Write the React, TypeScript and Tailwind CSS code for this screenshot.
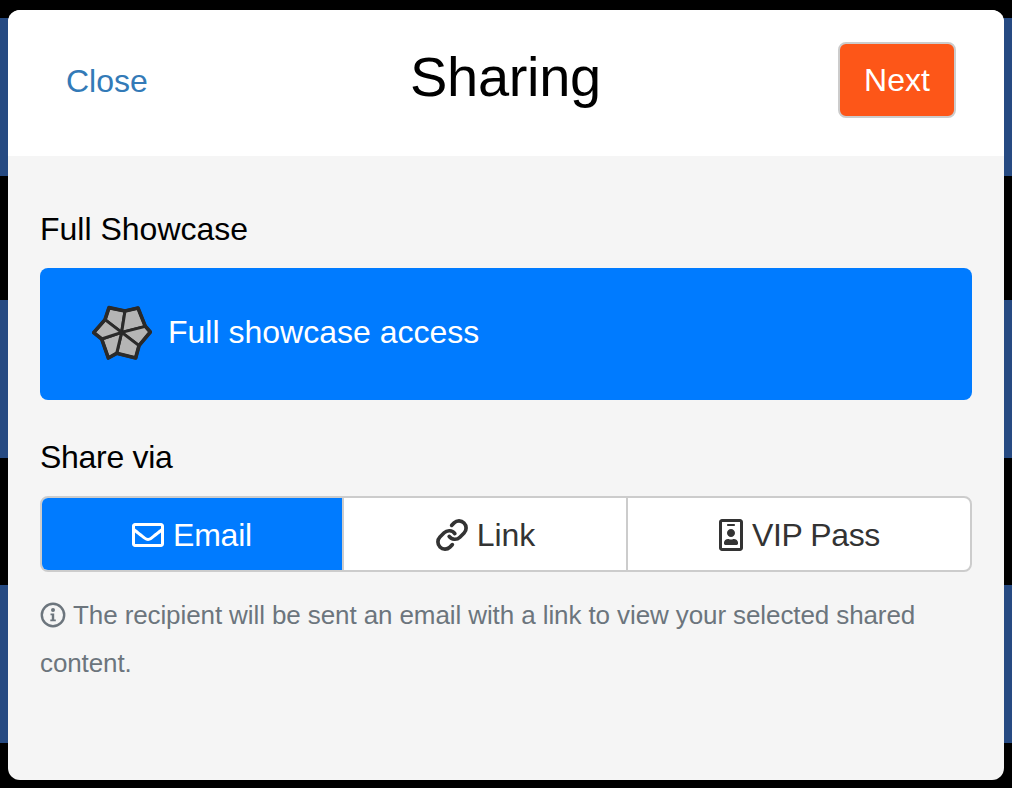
import { FaRegEnvelope, FaRegIdBadge } from "react-icons/fa";
import { Link as LinkIcon } from "lucide-react";

function Logo() {
  return (
    <svg width="60" height="58" viewBox="66 49 180 166" className="mr-4 mb-[2px] shrink-0">
      <g fill="#b5b5b5" stroke="#2a2a2a" strokeWidth="9" strokeLinejoin="round" strokeLinecap="round">
        <path d="M155 130 L165 66 L117 56 L105 92 Z" />
        <path d="M155 130 L165 66 L204 57 L226 112 Z" />
        <path d="M155 130 L226 112 L241 129 L207 170 Z" />
        <path d="M155 130 L207 170 L197 207 L140 193 Z" />
        <path d="M155 130 L140 193 L115 207 L95 150 Z" />
        <path d="M155 130 L95 150 L71 131 L105 92 Z" />
      </g>
      <path d="M117 56 L165 66 L204 57 L226 112 L241 129 L207 170 L197 207 L140 193 L115 207 L95 150 L71 131 L105 92 Z" fill="none" stroke="#2a2a2a" strokeWidth="11" strokeLinejoin="round" />
    </svg>
  );
}

function InfoIcon() {
  return (
    <svg width="26" height="26" viewBox="0 0 26 26" className="inline-block align-[-4px] mr-[7px]">
      <circle cx="13" cy="13" r="11.2" fill="none" stroke="#6c757d" strokeWidth="2.4" />
      <circle cx="13" cy="8" r="2" fill="#6c757d" />
      <path d="M10.5 11.5 H14.2 V17.5 H15.8 V19.3 H10.3 V17.5 H11.8 V13.3 H10.5 Z" fill="#6c757d" />
    </svg>
  );
}

export default function App() {
  return (
    <div className="relative w-[1012px] h-[788px] overflow-hidden bg-black font-['Liberation_Sans',Arial,sans-serif]">
      <div className="flex flex-col pt-[18px]">
        <div className="h-[158px] bg-[#264a82]" />
        <div className="h-[158px] mt-[124px] bg-[#264a82]" />
        <div className="h-[158px] mt-[127px] bg-[#264a82]" />
      </div>

      <div className="absolute left-2 top-[10px] w-[996px] h-[770px] rounded-[12px] overflow-hidden bg-[#f5f5f5]">
        <header className="relative h-[146px] bg-white flex items-center justify-between pl-[58px] pr-[48px]">
          <a className="text-[32px] leading-none text-[#337ab7] mb-[4px]">Close</a>
          <h1 className="absolute left-[402px] top-[32px] text-[56px] leading-[70px] tracking-[-0.3px] text-black">Sharing</h1>
          <button className="w-[118px] h-[76px] mt-[-6px] rounded-[8px] border-2 border-[#cccccc] bg-[#fd5618] text-white text-[32px] leading-none">
            Next
          </button>
        </header>

        <div className="px-8">
          <p className="mt-[53px] text-[32px] leading-[40px] text-black">Full Showcase</p>
          <div className="mt-[19px] h-[132px] rounded-[8px] bg-[#007bff] flex items-center pl-[52px] text-white text-[32px]">
            <Logo />
            <span className="mb-[5px]">Full showcase access</span>
          </div>

          <p className="mt-[37px] text-[32px] leading-[40px] tracking-[-0.3px] text-black">Share via</p>
          <div className="mt-[19px] h-[76px] flex rounded-[8px] border-2 border-[#cccccc] bg-white overflow-hidden text-[32px] text-[#333333]">
            <div className="w-[300px] bg-[#007bff] text-white flex items-center justify-center gap-[9px] pt-[1px]">
              <FaRegEnvelope size={32} />
              <span className="tracking-[-0.2px]">Email</span>
            </div>
            <div className="w-[284px] border-l-2 border-[#cccccc] flex items-center justify-center gap-[8px] pt-[1px]">
              <LinkIcon size={34} strokeWidth={2.6} />
              <span>Link</span>
            </div>
            <div className="flex-1 border-l-2 border-[#cccccc] flex items-center justify-center gap-[5px] pt-[1px] pr-[3px]">
              <FaRegIdBadge size={32} />
              <span className="tracking-[-0.4px]">VIP Pass</span>
            </div>
          </div>

          <p className="mt-[19px] text-[26px] leading-[48px] tracking-[-0.1px] text-[#6c757d]">
            <InfoIcon />
            The recipient will be sent an email with a link to view your selected shared content.
          </p>
        </div>
      </div>
    </div>
  );
}
